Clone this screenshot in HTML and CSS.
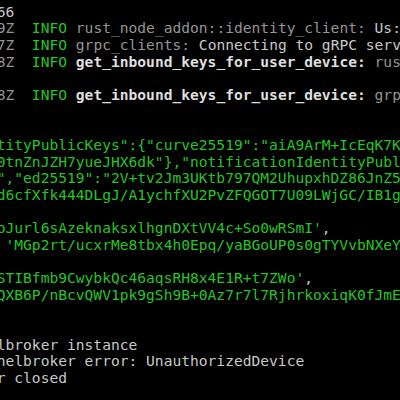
FILE: index.html
```html
<!DOCTYPE html>
<html>
<head>
<meta charset="utf-8">
<link rel="stylesheet" href="styles.css">
</head>
<body>
<div class="term">
<div class="ln"><span class="nrm">66</span></div>
<div class="ln"><span class="dim">9Z</span>  <span class="info">INFO</span> <span class="dim">rust_node_addon::identity_client:</span> <span class="nrm">Us: Getting device list for user</span></div>
<div class="ln"><span class="dim">7Z</span>  <span class="info">INFO</span> <span class="dim">grpc_clients:</span> <span class="nrm">Connecting to gRPC server</span></div>
<div class="ln"><span class="dim">8Z</span>  <span class="info">INFO</span> <span class="bold">get_inbound_keys_for_user_device:</span> <span class="dim">rust_node_addon</span></div>
<div class="ln"> </div>
<div class="ln"><span class="dim">8Z</span>  <span class="info">INFO</span> <span class="bold">get_inbound_keys_for_user_device:</span> <span class="dim">grpc_clients</span></div>
<div class="ln"> </div>
<div class="ln"> </div>
<div class="ln"><span class="grn">tityPublicKeys":{"curve25519":"aiA9ArM+IcEqK7KqzN</span></div>
<div class="ln"><span class="grn">0tnZnJZH7yueJHX6dk"},"notificationIdentityPublicKeys"</span></div>
<div class="ln"><span class="grn">","ed25519":"2V+tv2Jm3UKtb797QM2UhupxhDZ86JnZ5Qw</span></div>
<div class="ln"><span class="grn">d6cfXfk444DLgJ/A1ychfXU2PvZFQGOT7U09LWjGC/IB1gQ</span></div>
<div class="ln"> </div>
<div class="ln"><span class="grn">bJurl6sAzeknaksxlhgnDXtVV4c+So0wRSmI'</span><span class="nrm">,</span></div>
<div class="ln"><span class="grn"> 'MGp2rt/ucxrMe8tbx4h0Epq/yaBGoUP0s0gTYVvbNXeYk</span></div>
<div class="ln"> </div>
<div class="ln"><span class="grn">STIBfmb9CwybkQc46aqsRH8x4E1R+t7ZWo'</span><span class="nrm">,</span></div>
<div class="ln"><span class="grn">QXB6P/nBcvQWV1pk9gSh9B+0Az7r7l7RjhrkoxiqK0fJmEw</span></div>
<div class="ln"> </div>
<div class="ln"> </div>
<div class="ln"><span class="nrm">lbroker instance</span></div>
<div class="ln"><span class="nrm">helbroker error: UnauthorizedDevice</span></div>
<div class="ln"><span class="nrm">r closed</span></div>
</div>
</body>
</html>
```

FILE: styles.css
```css
html, body {
  margin: 0;
  padding: 0;
  background: #000;
  width: 400px;
  height: 400px;
  overflow: hidden;
}
.term {
  margin-left: -3.3px;
  padding-top: 3.6px;
  font-family: "DejaVu Sans Mono", "Liberation Mono", monospace;
  font-size: 14.6px;
  line-height: 16.67px;
  color: #c4c4c4;
}
.ln {
  white-space: pre;
  height: 16.67px;
  overflow: hidden;
}
.dim { color: #959595; }
.nrm { color: #c8c8c8; }
.bold { color: #dedede; font-weight: bold; }
.info { color: #26c526; }
.grn { color: #26c526; }
```
